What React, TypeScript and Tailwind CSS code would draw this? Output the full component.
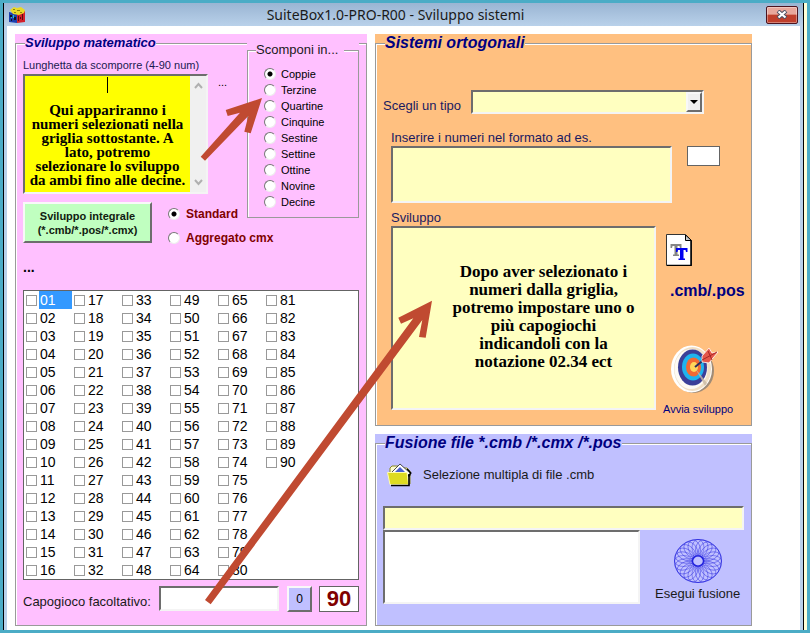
import { useState } from "react";
import type { ReactNode } from "react";
import clsx from "clsx";

const SPLITS = ["Coppie", "Terzine", "Quartine", "Cinquine", "Sestine", "Settine", "Ottine", "Novine", "Decine"];
const MODES = ["Standard", "Aggregato cmx"];
const NUMBERS = Array.from({ length: 90 }, (_, i) => String(i + 1).padStart(2, "0"));

const LEFT_NOTE =
  "Qui appariranno i\nnumeri selezionati nella\ngriglia sottostante. A\nlato, potremo\nselezionare lo sviluppo\nda ambi fino alle decine.";
const RIGHT_NOTE =
  "Dopo aver selezionato i\nnumeri dalla griglia,\npotremo impostare uno o\npiù capogiochi\nindicandoli con la\nnotazione 02.34 ect";

// classic Win32 bevels
const sunken =
  "block resize-none rounded-none border-2 border-t-[#6d6d6d] border-l-[#6d6d6d] border-r-[#f4f4f4] border-b-[#f4f4f4] outline-none";
const raised =
  "border-2 border-t-[#f8f8f8] border-l-[#f8f8f8] border-r-[#6d6d6d] border-b-[#6d6d6d]";
const radio =
  "size-3 shrink-0 appearance-none rounded-full border border-t-[#777] border-l-[#777] border-r-[#eee] border-b-[#eee] bg-white checked:bg-[radial-gradient(circle,#000_2px,#fff_3px)]";

type GroupProps = {
  title: string;
  tone: string;
  legend: string;
  className?: string;
  children: ReactNode;
};

function GroupBox({ title, tone, legend, className, children }: GroupProps) {
  return (
    <fieldset className={clsx("min-w-0 border border-[#9a9a9a] shadow-[inset_1px_1px_0_#fff]", className)}>
      <legend className={clsx("whitespace-nowrap", tone, legend)}>{title}</legend>
      {children}
    </fieldset>
  );
}

function AppIcon() {
  return (
    <svg className="size-4" viewBox="0 0 16 16" aria-hidden="true">
      <path d="M0 5 8 7v9L0 15z" fill="#1b3fae" />
      <path d="M16 4 8 7v9l8-1z" fill="#d3202b" />
      <path d="M1 3 5 0l3 1 4-1 4 3-1 3-5 2-6-1z" fill="#e8d92a" />
      <path d="M4 2h2v1H4zM8 3h3v1H8zM5 5h2v1H5zM11 5h2v1h-2z" fill="#8c8010" />
      <path d="M1 8h2v2H1zM5 10h2v3H5zM2 12h1v2H2z" fill="#11151f" />
      <path d="M4 8h1v3H4zM2 10h1v1H2z" fill="#2ec4c9" />
      <path d="M9 9h1v5H9zM13 7h1v6h-1zM11 10h1v2h-1z" fill="#5a0b12" />
    </svg>
  );
}

function FontFileIcon() {
  return (
    <svg className="h-8 w-[26px]" viewBox="0 0 26 32" aria-hidden="true">
      <path d="M.5.5h19l6 6v25H.5z" fill="#fff" stroke="#333" />
      <path d="M25 7v24.500H1" fill="none" stroke="#000" strokeWidth="1.500" />
      <path d="M19.500 1v5.500h6z" fill="#c8c8c8" stroke="#000" />
      <path d="M4.500 10h11v4h-1.500l-.5-2h-2v8.500h1.500V22H7v-1.500h1.500V12h-2L6 14H4.500z" fill="#858585" />
      <path d="M10 14h11.500v4H20l-.5-2h-2v8.500H19V26h-6.500v-1.500H14V16h-2l-.5 2H10z" fill="#0000f0" />
    </svg>
  );
}

function TargetIcon() {
  return (
    <svg className="h-[49px] w-12" viewBox="0 0 48 49" aria-hidden="true">
      <ellipse cx="22.500" cy="26" rx="20.500" ry="22" fill="#a08b76" />
      <ellipse cx="20.500" cy="24" rx="20.500" ry="23.500" fill="#fff" />
      <ellipse cx="21.500" cy="24" rx="18.500" ry="22" fill="#f0dfc6" />
      <ellipse cx="20" cy="24" rx="16.500" ry="20" fill="#fdfaf4" />
      <ellipse cx="21.500" cy="22.500" rx="14.500" ry="18" fill="#3b3f98" />
      <ellipse cx="22" cy="22" rx="11" ry="13.500" fill="#1fb4ee" />
      <ellipse cx="22.500" cy="22" rx="7.500" ry="9.500" fill="#f26a33" />
      <ellipse cx="23" cy="22" rx="4" ry="5" fill="#ffd65a" />
      <path d="m24 23 12 15-2 3z" fill="#c9b9a5" opacity=".8" />
      <path d="M24 22 40 9" stroke="#2c2c5c" strokeWidth="2" />
      <path d="m31 11 7-8 3 5 6-1-5 6-4 5-7-1z" fill="#e5584a" stroke="#fff" strokeWidth=".8" />
      <path d="m31 15 15-8M37 6l4 9" stroke="#a92424" strokeWidth="1" />
    </svg>
  );
}

function FolderIcon() {
  return (
    <svg className="h-6 w-[26px]" viewBox="0 0 26 24" aria-hidden="true">
      <path d="M3 9V5l2-2h6l2 2h7l3 3v13H4z" fill="#fbfad0" stroke="#8a8820" />
      <path d="m4 10 9-9 10 9v3H6z" fill="#fff" stroke="#222" strokeWidth=".8" />
      <path d="m8 9 5-5 5 5z" fill="#4a5fd0" />
      <path d="M.5 9.500h19.500l1.500 12H3z" fill="#dedb22" stroke="#fffbb0" />
      <path d="M4 22.500h18V11" fill="none" stroke="#000" strokeWidth="1.600" />
      <path d="m20 6 4 4-2.500 3" fill="none" stroke="#000" strokeWidth="1.200" />
    </svg>
  );
}

function RosetteIcon() {
  const turns = Array.from({ length: 24 }, (_, i) => i * 15);
  return (
    <svg className="h-11 w-12" viewBox="-24 -24 48 48" preserveAspectRatio="none" aria-hidden="true">
      <g fill="none" stroke="#2222dd" strokeWidth=".45">
        {turns.map((deg) => (
          <ellipse key={deg} cx="14.500" rx="9" ry="6" transform={`rotate(${deg})`} />
        ))}
        <circle r="23.500" strokeWidth=".8" />
        <circle r="5.500" strokeWidth="1.400" />
      </g>
    </svg>
  );
}

function Arrows() {
  return (
    <svg className="pointer-events-none absolute top-0 left-0" width="450" height="620" aria-hidden="true">
      <g fill="#c04a31">
        <path d="M262 98 225.700 110 227.700 116 240 112.700 200.700 156.700 205 160.700 248.300 116 244.300 131.700 250.700 133.300z" />
        <path d="M432 300.700 398.300 317.700 401 323.700 413.300 318.300 205 600 210.700 604.300 422.300 320 419 337 425.700 337.700z" />
      </g>
    </svg>
  );
}

function TitleBar() {
  return (
    <header className="flex h-[23px] items-center bg-linear-to-b from-[#9ab5d3] to-[#b9d1ea] pr-[5px] pl-[5px]">
      <AppIcon />
      <h1 className="flex-1 text-center font-['Noto_Sans',sans-serif] text-sm leading-5 text-[#1a1a1a]">
        SuiteBox1.0-PRO-R00 - Sviluppo sistemi
      </h1>
      <button
        type="button"
        aria-label="Chiudi"
        className="flex h-[18px] w-8 items-center justify-center rounded-[2px] border border-[#4b1420] bg-linear-to-b from-[#e8a79c] from-45% to-[#bf3f2c] to-50% shadow-[inset_0_0_0_1px_rgba(255,255,255,0.35)]"
      >
        <svg width="12" height="9" viewBox="0 0 12 9" aria-hidden="true">
          <path d="m2 1 8 7M10 1 2 8" stroke="#4b4f63" strokeWidth="4" />
          <path d="m2.500 1.500 7 6M9.500 1.500l-7 6" stroke="#fff" strokeWidth="2.200" />
        </svg>
      </button>
    </header>
  );
}

function MathPanel() {
  const [split, setSplit] = useState(SPLITS[0]);
  const [mode, setMode] = useState(MODES[0]);
  const [current, setCurrent] = useState("01");

  return (
    <section className="bg-[#ffc0ff]">
      <GroupBox
        title="Sviluppo matematico"
        tone="bg-[#ffc0ff] text-[#000080]"
        legend="ml-0.5 text-[13px] leading-[18px] font-bold italic"
        className="px-[7px] pb-[13px]"
      >
        <div className="flex items-start">
          <div className="min-w-0 flex-1">
            <label htmlFor="lunghetta" className="mt-[5px] block text-[11px] leading-4 text-[#1a1a50]">
              Lunghetta da scomporre (4-90 num)
            </label>
            <div className="mt-px flex items-start gap-2.5">
              <div className="relative flex shrink-0">
                <textarea
                  id="lunghetta"
                  defaultValue={LEFT_NOTE}
                  spellCheck={false}
                  className={clsx(
                    sunken,
                    "h-[120px] w-[185px] overflow-hidden bg-[#ffff00] pt-[27px] pr-4 text-center font-['Liberation_Serif',serif] text-[15px] leading-[14px] font-bold whitespace-pre text-black"
                  )}
                />
                <span className="absolute top-[3px] left-[84px] h-4 w-px bg-black" />
                <div className="absolute inset-y-0.5 right-0.5 flex w-4 flex-col items-center justify-between bg-[#f0f0f0] py-1.5">
                  <svg width="9" height="7" viewBox="0 0 9 7" aria-hidden="true">
                    <path d="m1 6 3.500-4L8 6" fill="none" stroke="#b0b0b0" strokeWidth="2" />
                  </svg>
                  <svg width="9" height="7" viewBox="0 0 9 7" aria-hidden="true">
                    <path d="m1 1 3.500 4L8 1" fill="none" stroke="#b0b0b0" strokeWidth="2" />
                  </svg>
                </div>
              </div>
              <span className="text-[11px] leading-4">...</span>
            </div>
            <div className="mt-2 flex items-start gap-4">
              <button
                type="button"
                className={clsx(raised, "h-[41px] w-[129px] shrink-0 bg-[#c0ffc0] text-[11px] leading-[14px] font-bold text-[#102010]")}
              >
                Sviluppo integrale
                <br />
                (*.cmb/*.pos/*.cmx)
              </button>
              <div className="flex flex-col gap-2 pt-1">
                {MODES.map((m) => (
                  <label key={m} className="flex items-center gap-1.5 text-xs leading-4 font-bold whitespace-nowrap text-[#800000]">
                    <input type="radio" name="mode" checked={mode === m} onChange={() => setMode(m)} className={radio} />
                    {m}
                  </label>
                ))}
              </div>
            </div>
          </div>

          {/* covers the outer frame line where the inner group starts */}
          <div className="-mt-[11px] w-28 shrink-0 bg-[#ffc0ff]">
            <GroupBox
              title="Scomponi in..."
              tone="bg-[#ffc0ff] text-[#1a1a1a]"
              legend="ml-2 pr-1.5 text-[13px] leading-[18px]"
              className="pb-[7px]"
            >
              <div className="pt-[7px] pl-4">
                {SPLITS.map((s) => (
                  <label key={s} className="flex items-center gap-[5px] text-[11px] leading-4 text-black">
                    <input type="radio" name="split" checked={split === s} onChange={() => setSplit(s)} className={radio} />
                    {s}
                  </label>
                ))}
              </div>
            </GroupBox>
          </div>
        </div>

        <p className="mt-[13px] text-sm leading-4 font-bold">...</p>

        <div className="mt-[15px] grid auto-cols-[48px] grid-flow-col grid-rows-[repeat(16,18px)] border border-[#646464] bg-white">
          {NUMBERS.map((n) => (
            <label key={n} className="flex items-center gap-0.5 pl-0.5 text-sm leading-[18px] text-black">
              <input
                type="checkbox"
                onChange={() => setCurrent(n)}
                className="size-[11px] shrink-0 appearance-none border border-[#999] bg-white checked:bg-[#3399ff]"
              />
              <span className={clsx("flex-1 pl-px", current === n && "bg-[#3399ff] text-white")}>{n}</span>
            </label>
          ))}
        </div>

        <div className="mt-1.5 flex items-start">
          <label htmlFor="capogioco" className="w-[136px] shrink-0 pt-2 text-[13px] leading-4 whitespace-nowrap text-[#1a1a1a]">
            Capogioco facoltativo:
          </label>
          <input id="capogioco" type="text" className={clsx(sunken, "h-[25px] min-w-0 flex-1 bg-white px-1 text-xs")} />
          <button type="button" className={clsx(raised, "ml-2 h-[26px] w-[25px] shrink-0 bg-[#c0c0ff] text-xs")}>
            0
          </button>
          <output className="ml-[7px] flex h-[26px] w-10 shrink-0 items-center justify-center border border-[#646464] bg-white text-[22px] leading-6 font-bold text-[#800000]">
            90
          </output>
        </div>
      </GroupBox>
    </section>
  );
}

function OrthogonalPanel() {
  return (
    <section className="bg-[#ffc080]">
      <GroupBox
        title="Sistemi ortogonali"
        tone="bg-[#ffc080] text-[#000080]"
        legend="ml-0.5 text-base leading-[18px] font-bold italic"
        className="px-[7px] pb-2"
      >
        <div className="flex items-end pt-[38px]">
          <label htmlFor="tipo" className="w-[88px] shrink-0 text-[13px] leading-4 text-[#1a1a60]">
            Scegli un tipo
          </label>
          <div className="relative">
            <select id="tipo" className={clsx(sunken, "h-6 w-[233px] appearance-none bg-[#ffffc0] text-xs")}>
              <option value=""></option>
            </select>
            <span
              className={clsx(
                raised,
                "pointer-events-none absolute top-0.5 right-0.5 flex h-5 w-4 items-center justify-center bg-[#f0f0f0]"
              )}
            >
              <svg width="8" height="4" viewBox="0 0 8 4" className="shrink-0" aria-hidden="true">
                <path d="M0 0h8L4 4z" />
              </svg>
            </span>
          </div>
        </div>

        <div className="pl-2">
          <label htmlFor="numeri" className="mt-4 block text-[13px] leading-4 text-[#1a1a60]">
            Inserire i numeri nel formato ad es.
          </label>
          <div className="flex items-start gap-[15px]">
            <textarea id="numeri" className={clsx(sunken, "h-[57px] w-[281px] bg-[#ffffc0] text-xs")} />
            <input type="text" aria-label="Totale" className="h-5 w-[33px] border border-[#646464] bg-white text-xs outline-none" />
          </div>

          <label htmlFor="sviluppo" className="mt-[7px] block text-[13px] leading-4 text-[#1a1a60]">
            Sviluppo
          </label>
          <div className="flex items-start gap-[7px]">
            <textarea
              id="sviluppo"
              defaultValue={RIGHT_NOTE}
              spellCheck={false}
              className={clsx(
                sunken,
                "h-[184px] w-[265px] shrink-0 overflow-hidden bg-[#ffffc0] pt-[35px] pl-10 text-center font-['Liberation_Serif',serif] text-[17px] leading-[18px] font-bold whitespace-pre text-black"
              )}
            />
            <div className="flex flex-col items-start pt-2 text-[#000080]">
              <button type="button" className="flex flex-col items-start gap-[17px] pl-[3px]">
                <FontFileIcon />
                <span className="pl-1 text-base leading-4 font-bold">.cmb/.pos</span>
              </button>
              <button type="button" className="mt-[46px] flex flex-col items-start gap-[7px]">
                <span className="pl-2">
                  <TargetIcon />
                </span>
                <span className="text-[11px] leading-4 whitespace-nowrap">Avvia sviluppo</span>
              </button>
            </div>
          </div>
        </div>
      </GroupBox>
    </section>
  );
}

function MergePanel() {
  return (
    <section className="bg-[#c0c0ff]">
      <GroupBox
        title="Fusione file *.cmb /*.cmx /*.pos"
        tone="bg-[#c0c0ff] text-[#000080]"
        legend="ml-0.5 text-base leading-[18px] font-bold italic"
        className="px-[7px] pb-[21px]"
      >
        <button type="button" className="mt-[11px] flex items-center gap-2.5 pl-1 text-[13px] leading-4 text-[#1a1a1a]">
          <FolderIcon />
          Selezione multipla di file .cmb
        </button>
        <input type="text" aria-label="Percorso file" className={clsx(sunken, "mt-[19px] h-6 w-full bg-[#ffffc0] px-1 text-xs")} />
        <div className="flex items-start gap-[15px]">
          <textarea aria-label="File selezionati" className={clsx(sunken, "h-[74px] w-[257px] bg-white text-xs")} />
          <button type="button" className="flex flex-col items-center gap-[3px] pt-[9px] text-[13px] leading-4 whitespace-nowrap text-[#1a1a1a]">
            <RosetteIcon />
            Esegui fusione
          </button>
        </div>
      </GroupBox>
    </section>
  );
}

export default function App() {
  return (
    <div className="relative flex min-h-screen bg-[#4bacc6] p-[3px] font-['Liberation_Sans',Arial,sans-serif]">
      <div className="min-w-0 flex-1 border-r border-l border-black bg-white">
        <TitleBar />
        <main className="grid grid-cols-[minmax(0,352fr)_minmax(0,377fr)] items-start gap-2 border-r-[3px] border-l-[3px] border-[#b9d1ea] pt-2 pr-12 pb-1 pl-2">
          <MathPanel />
          <div className="flex min-w-0 flex-col gap-2">
            <OrthogonalPanel />
            <MergePanel />
          </div>
        </main>
      </div>
      <div className="w-[3px] bg-[#ffffd8]" />
      <Arrows />
    </div>
  );
}
